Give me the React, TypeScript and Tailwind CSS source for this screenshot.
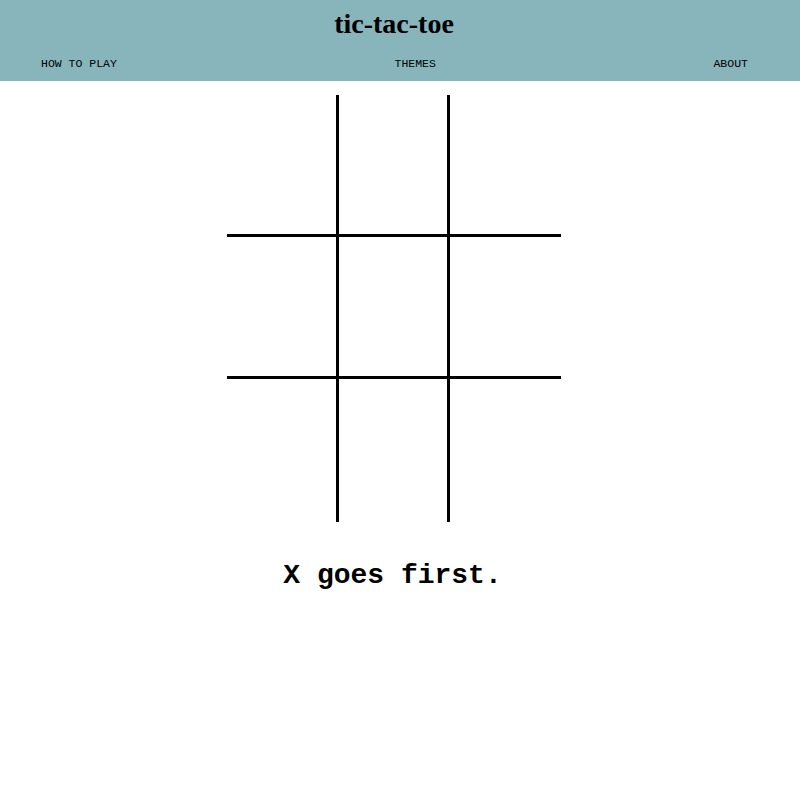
import React from "react";

export default function App() {
  const rows = [0, 1, 2];
  const cols = [0, 1, 2];
  const colW = ["w-[112px]", "w-[111px]", "w-[111px]"];
  const rowH = ["h-[142px]", "h-[142px]", "h-[143px]"];
  return (
    <div className="min-h-[800px] bg-white">
      <header className="h-[81px] bg-[#88b4bb] flex flex-col">
        <h1
          className="text-center text-[28px] font-bold leading-none pt-[10px] pr-[12px] text-black"
          style={{ fontFamily: '"Liberation Serif", serif' }}
        >
          tic-tac-toe
        </h1>
        <nav
          className="flex justify-between pl-[41px] pr-[52px] mt-[20px] text-[11.5px] leading-none text-black"
          style={{ fontFamily: '"Liberation Mono", monospace' }}
        >
          <span>HOW TO PLAY</span>
          <span>THEMES</span>
          <span>ABOUT</span>
        </nav>
      </header>
      <div className="flex justify-center pr-[12px] pt-[14px]">
        <div className="flex flex-col">
          {rows.map((r) => (
            <div key={r} className="flex">
              {cols.map((c) => (
                <div
                  key={c}
                  className={`${colW[c]} ${rowH[r]} border-black ${c < 2 ? "border-r-[3px]" : ""} ${r < 2 ? "border-b-[3px]" : ""}`}
                />
              ))}
            </div>
          ))}
        </div>
      </div>
      <p
        className="text-center text-[28px] font-bold leading-none pr-[15px] mt-[40px] text-black"
        style={{ fontFamily: '"Liberation Mono", monospace' }}
      >
        X goes first.
      </p>
    </div>
  );
}
